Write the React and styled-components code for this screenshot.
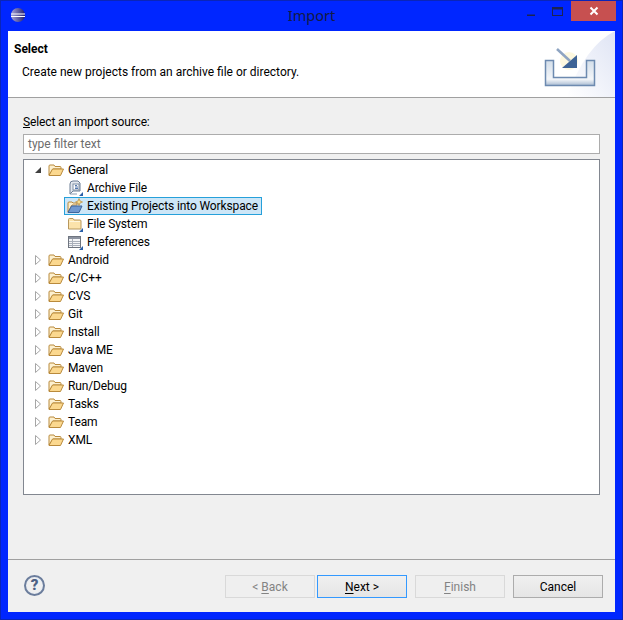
import React from "react";
import styled, { createGlobalStyle } from "styled-components";

const GlobalStyle = createGlobalStyle`
  html, body { margin: 0; padding: 0; background: #0026ff; }
  * { box-sizing: border-box; }
`;

const Frame = styled.div`
  width: 623px;
  height: 620px;
  background: #0026ff;
  border: 1px solid #0a25b8;
  padding: 0 7px 7px;
  display: flex;
  flex-direction: column;
  font-family: Roboto, "Noto Sans", sans-serif;
  font-size: 12px;
  color: #000;
  overflow: hidden;
`;

const TitleBar = styled.div`
  height: 30px;
  flex: none;
  position: relative;
  display: flex;
  justify-content: center;
  align-items: center;
`;

const AppIcon = styled.svg`
  position: absolute;
  left: 2px;
  top: 6px;
`;

const Title = styled.div`
  font-family: "Noto Sans", sans-serif;
  font-size: 14.5px;
  color: #141b45;
  padding-bottom: 2px;
`;

const WindowButtons = styled.div`
  position: absolute;
  right: -1px;
  top: 0;
  display: flex;
  align-items: stretch;
  height: 20px;
`;

const WindowButton = styled.div`
  width: ${(p) => p.$w}px;
  display: flex;
  align-items: center;
  justify-content: center;
  background: ${(p) => p.$bg || "transparent"};
`;

const Client = styled.div`
  flex: 1;
  display: flex;
  flex-direction: column;
  background: #f0f0f0;
  min-height: 0;
`;

const Banner = styled.div`
  height: 67px;
  flex: none;
  position: relative;
  background: #fff;
  border-bottom: 1px solid #a0a0a0;
  padding: 11px 6px;
  overflow: hidden;
`;

const BannerArt = styled.svg`
  position: absolute;
  right: 0;
  top: 0;
`;

const BannerTitle = styled.div`
  font-weight: 700;
  font-size: 12px;
  line-height: 15px;
  position: relative;
`;

const BannerText = styled.div`
  margin: 8px 0 0 8px;
  line-height: 15px;
  position: relative;
`;

const Body = styled.div`
  flex: 1;
  padding: 17px 15px 0;
  display: flex;
  flex-direction: column;
  min-height: 0;
`;

const Label = styled.div`
  line-height: 15px;
  margin-bottom: 4px;
  letter-spacing: -0.12px;
`;

const FilterInput = styled.div`
  height: 20px;
  flex: none;
  background: #fff;
  border: 1px solid #acacac;
  color: #6d6d6d;
  padding: 0 4px;
  line-height: 18px;
  margin-bottom: 5px;
`;

const Tree = styled.div`
  height: 336px;
  flex: none;
  background: #fff;
  border: 1px solid #828790;
  padding: 1px 0 0 9px;
`;

const Row = styled.div`
  height: 18px;
  display: flex;
  align-items: center;
  padding-left: ${(p) => (p.$child ? 34 : 0)}px;
`;

const Twisty = styled.svg`
  flex: none;
  width: 10px;
  height: 10px;
  margin-right: 5px;
`;

const IconSlot = styled.span`
  flex: none;
  width: 16px;
  height: 16px;
  margin-right: 4px;
  display: block;
`;

const RowText = styled.span`
  line-height: 16px;
  white-space: nowrap;
  letter-spacing: -0.12px;
`;

const SelectedRow = styled.div`
  display: flex;
  align-items: center;
  height: 18px;
  margin-left: 31px;
  width: 198px;
  padding-left: 2px;
  background: #cde6f7;
  border: 1px solid #26a0da;
`;

const Footer = styled.div`
  height: 53px;
  flex: none;
  margin-top: auto;
  border-top: 1px solid #a0a0a0;
  display: flex;
  align-items: flex-start;
  padding: 15px 12px 0 16px;
`;

const Help = styled.div`
  width: 21px;
  height: 21px;
  border-radius: 50%;
  border: 2px solid #6b7d9c;
  color: #4d6184;
  font-weight: 900;
  font-size: 15px;
  line-height: 17px;
  text-align: center;
  margin-right: auto;
  box-shadow: inset 0 0 0 1px #e8ecf2;
`;

const Button = styled.div`
  width: 90px;
  height: 23px;
  margin-left: ${(p) => p.$gap || 0}px;
  display: flex;
  align-items: center;
  justify-content: center;
  font-size: 12px;
  color: ${(p) => (p.$disabled ? "#838383" : "#000")};
  border: 1px solid ${(p) => (p.$disabled ? "#d9d9d9" : p.$default ? "#3399ff" : "#acacac")};
  background: ${(p) => (p.$disabled ? "#efefef" : "linear-gradient(#f0f0f0, #e5e5e5)")};
  u { text-underline-offset: 2px; }
`;

const Arrow = ({ open }) => (
  <Twisty viewBox="0 0 10 10">
    {open ? (
      <path d="M8 2 L8 8 L2 8 Z" fill="#404040" />
    ) : (
      <path d="M2.5 0.5 L7.5 5 L2.5 9.5 Z" fill="#fff" stroke="#a6a6a6" />
    )}
  </Twisty>
);

const OpenFolder = () => (
  <svg width="16" height="16" viewBox="0 0 16 16">
    <path d="M1 13 V4 Q1 3 2 3 H6 L7 4.5 H12 Q13 4.5 13 5.5 V7 H5 L1 13" fill="#fdf0cf" stroke="#b98a3c" />
    <path d="M1 13.5 L4.5 7 H15.5 L12.5 13.5 Z" fill="#fbd88f" stroke="#b98a3c" strokeLinejoin="round" />
  </svg>
);

const Badge = () => <path d="M16 12 V16 H12 Z" fill="#2a5fa8" />;

const ArchiveIcon = () => (
  <svg width="16" height="16" viewBox="0 0 16 16">
    <path d="M3 14 V4 Q3 1 6 1 H11 L13 3 V11 H6 Z" fill="#e4e8ee" stroke="#6b7d94" />
    <rect x="6" y="4" width="6" height="6" fill="#fff" stroke="#7f8fa4" />
    <path d="M8 5.5 H10 M8 7 H11 M8 8.5 H11" stroke="#5579ad" />
    <path d="M3 14 H10" stroke="#8a9bb0" />
    <Badge />
  </svg>
);

const ProjectsIcon = () => (
  <svg width="16" height="16" viewBox="0 0 16 16">
    <path d="M1 14 V5 Q1 4 2 4 H5 L6 5 H10 V7 H5 Z" fill="#fdf0cf" stroke="#b98a3c" />
    <path d="M1 14.5 L4.5 8 H15 L12 14.5 Z" fill="#6f98cf" stroke="#3e659c" strokeLinejoin="round" />
    <path d="M12 0.5 L13 3 L15.5 4 L13 5 L12 7.5 L11 5 L8.5 4 L11 3 Z" fill="#fbe08a" stroke="#b98a3c" strokeWidth="0.7" />
  </svg>
);

const FolderIcon = () => (
  <svg width="16" height="16" viewBox="0 0 16 16">
    <path d="M1.5 13 V3.5 Q1.5 2.5 2.5 2.5 H6 L7 4 H13 Q14 4 14 5 V13 Z" fill="#fce3ab" stroke="#b8985c" strokeLinejoin="round" />
    <path d="M2.5 5.5 H13" stroke="#fff6dd" />
    <Badge />
  </svg>
);

const PrefsIcon = () => (
  <svg width="16" height="16" viewBox="0 0 16 16">
    <rect x="1.5" y="2.5" width="12" height="11" fill="#f4f5f7" stroke="#6f7580" />
    <rect x="2" y="3" width="11" height="2" fill="#8c93a0" />
    <path d="M2 7.5 H13 M2 9.5 H13 M2 11.5 H13 M5.5 5 V13" stroke="#a9afba" />
    <Badge />
  </svg>
);

const sources = ["Android", "C/C++", "CVS", "Git", "Install", "Java ME", "Maven", "Run/Debug", "Tasks", "Team", "XML"];

export default function App() {
  return (
    <Frame>
      <GlobalStyle />
      <TitleBar>
        <AppIcon width="16" height="16" viewBox="0 0 16 16">
          <defs>
            <linearGradient id="globe" x1="0" x2="1" y1="0" y2="0">
              <stop offset="0" stopColor="#a5a2d8" />
              <stop offset="1" stopColor="#23206e" />
            </linearGradient>
          </defs>
          <circle cx="8" cy="8" r="7" fill="url(#globe)" />
          <path d="M1 7 H15 M1 9.5 H15" stroke="#fff" />
        </AppIcon>
        <Title>Import</Title>
        <WindowButtons>
          <WindowButton $w={26}>
            <svg width="10" height="10" viewBox="0 0 10 10">
              <path d="M1 9.5 H9" stroke="#1c2450" strokeWidth="2" />
            </svg>
          </WindowButton>
          <WindowButton $w={27}>
            <svg width="11" height="9" viewBox="0 0 11 9">
              <rect x="0.5" y="0.5" width="10" height="8" fill="none" stroke="#1c2450" />
              <path d="M0 1.5 H11" stroke="#1c2450" strokeWidth="2" />
            </svg>
          </WindowButton>
          <WindowButton $w={45} $bg="#c75050">
            <svg width="10" height="10" viewBox="0 0 10 10">
              <path d="M1.5 1.5 L8.5 8.5 M8.5 1.5 L1.5 8.5" stroke="#fff" strokeWidth="2" />
            </svg>
          </WindowButton>
        </WindowButtons>
      </TitleBar>
      <Client>
        <Banner>
          <BannerArt width="100" height="66" viewBox="0 0 100 66">
            <defs>
              <linearGradient id="sweep" x1="0" x2="1" y1="1" y2="0">
                <stop offset="0" stopColor="#fff" />
                <stop offset="1" stopColor="#dfe4f4" />
              </linearGradient>
              <linearGradient id="tray" x1="0" x2="0" y1="0" y2="1">
                <stop offset="0" stopColor="#d3deea" />
                <stop offset="0.75" stopColor="#f4f6f9" />
                <stop offset="1" stopColor="#a9bbd2" />
              </linearGradient>
            </defs>
            <path d="M100 0 Q70 15 52 66 H100 Z" fill="url(#sweep)" />
            <circle cx="54" cy="30" r="9" fill="#fdf8df" />
            <path d="M30.5 29.5 H38.5 V46.5 H71.5 V29.5 H79.5 V54.5 H30.5 Z" fill="url(#tray)" stroke="#6d8ab0" strokeWidth="1.5" />
            <path d="M42 18 L55 30" stroke="#8ea4c2" strokeWidth="2.5" />
            <path d="M62 24 V37 H47 Z" fill="#3e6395" />
          </BannerArt>
          <BannerTitle>Select</BannerTitle>
          <BannerText>Create new projects from an archive file or directory.</BannerText>
        </Banner>
        <Body>
          <Label><u>S</u>elect an import source:</Label>
          <FilterInput>type filter text</FilterInput>
          <Tree>
            <Row><Arrow open /><IconSlot><OpenFolder /></IconSlot><RowText>General</RowText></Row>
            <Row $child><IconSlot><ArchiveIcon /></IconSlot><RowText>Archive File</RowText></Row>
            <SelectedRow>
              <IconSlot><ProjectsIcon /></IconSlot>
              <RowText>Existing Projects into Workspace</RowText>
            </SelectedRow>
            <Row $child><IconSlot><FolderIcon /></IconSlot><RowText>File System</RowText></Row>
            <Row $child><IconSlot><PrefsIcon /></IconSlot><RowText>Preferences</RowText></Row>
            {sources.map((name) => (
              <Row key={name}>
                <Arrow />
                <IconSlot><OpenFolder /></IconSlot>
                <RowText>{name}</RowText>
              </Row>
            ))}
          </Tree>
        </Body>
        <Footer>
          <Help>?</Help>
          <Button $disabled>&lt;&nbsp;<u>B</u>ack</Button>
          <Button $default $gap={2}><u>N</u>ext &gt;</Button>
          <Button $disabled $gap={8}><u>F</u>inish</Button>
          <Button $gap={8}>Cancel</Button>
        </Footer>
      </Client>
    </Frame>
  );
}
